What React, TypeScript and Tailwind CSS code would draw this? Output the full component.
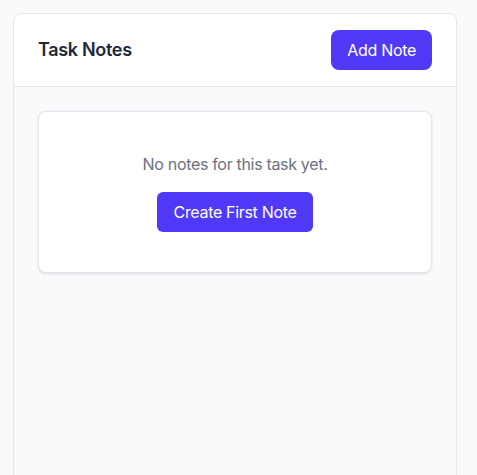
export default function App() {
  return (
    <div
      className="min-h-screen bg-gray-50 pl-[13px] pt-[13px] tracking-[-0.02em]"
      style={{ fontFamily: 'Inter, "Noto Sans", sans-serif' }}
    >
      <div className="w-[444px] min-h-[462px] rounded-t-lg border border-b-0 border-gray-200 bg-gray-50 overflow-hidden">
        <div className="flex items-center justify-between border-b border-gray-200 bg-white px-6 py-4">
          <h2 className="text-lg font-semibold text-gray-800">Task Notes</h2>
          <button
            type="button"
            className="h-10 rounded-lg bg-indigo-600 px-4 text-base font-normal text-white"
          >
            Add Note
          </button>
        </div>
        <div className="p-6">
          <div className="flex flex-col items-center rounded-lg border border-gray-200 bg-white py-10 shadow-sm">
            <p className="mb-4 text-base text-gray-500">No notes for this task yet.</p>
            <button
              type="button"
              className="h-10 rounded-md bg-indigo-600 px-[17px] text-base font-normal text-white"
            >
              Create First Note
            </button>
          </div>
        </div>
      </div>
    </div>
  )
}
